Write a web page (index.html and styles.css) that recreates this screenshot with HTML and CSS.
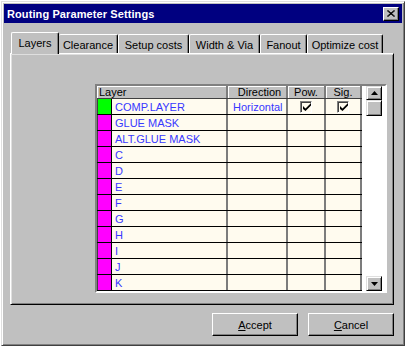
FILE: index.html
```html
<!DOCTYPE html>
<html lang="en">
<head>
    <meta charset="UTF-8">
    <title>Routing Parameter Settings</title>
    <link rel="stylesheet" href="styles.css">
</head>
<body>
<div class="dialog">
    <div class="titlebar">
        <span class="title">Routing Parameter Settings</span>
        <div class="close">
            <svg width="8" height="7" viewBox="0 0 8 7"><path d="M0 0.5L7 6.5M1 0.5L8 6.5M7 0.5L0 6.5M8 0.5L1 6.5" stroke="#000" stroke-width="1"/></svg>
        </div>
    </div>
    <div class="tabs">
        <div class="tab active w-layers">Layers</div>
        <div class="tab w-clear">Clearance</div>
        <div class="tab w-setup">Setup costs</div>
        <div class="tab w-width">Width &amp; Via</div>
        <div class="tab w-fanout">Fanout</div>
        <div class="tab w-opt">Optimize cost</div>
    </div>
    <div class="panel">
        <div class="grid">
            <div class="table">
                <div class="row head">
                    <div class="cell c-layer">Layer</div>
                    <div class="cell c-dir">Direction</div>
                    <div class="cell c-pow">Pow.</div>
                    <div class="cell c-sig">Sig.</div>
                </div>
                <div class="row">
                    <div class="cell c-layer"><span class="swatch green"></span>COMP.LAYER</div>
                    <div class="cell c-dir">Horizontal</div>
                    <div class="cell c-pow"><span class="check"><svg width="8" height="8" viewBox="0 0 8 8"><path d="M0 3v3l2.5 2l5.5-5.5v-2.5l-5.5 5.5z" fill="#000"/></svg></span></div>
                    <div class="cell c-sig"><span class="check"><svg width="8" height="8" viewBox="0 0 8 8"><path d="M0 3v3l2.5 2l5.5-5.5v-2.5l-5.5 5.5z" fill="#000"/></svg></span></div>
                </div>
                <div class="row"><div class="cell c-layer"><span class="swatch"></span>GLUE MASK</div><div class="cell c-dir"></div><div class="cell c-pow"></div><div class="cell c-sig"></div></div>
                <div class="row"><div class="cell c-layer"><span class="swatch"></span>ALT.GLUE MASK</div><div class="cell c-dir"></div><div class="cell c-pow"></div><div class="cell c-sig"></div></div>
                <div class="row"><div class="cell c-layer"><span class="swatch"></span>C</div><div class="cell c-dir"></div><div class="cell c-pow"></div><div class="cell c-sig"></div></div>
                <div class="row"><div class="cell c-layer"><span class="swatch"></span>D</div><div class="cell c-dir"></div><div class="cell c-pow"></div><div class="cell c-sig"></div></div>
                <div class="row"><div class="cell c-layer"><span class="swatch"></span>E</div><div class="cell c-dir"></div><div class="cell c-pow"></div><div class="cell c-sig"></div></div>
                <div class="row"><div class="cell c-layer"><span class="swatch"></span>F</div><div class="cell c-dir"></div><div class="cell c-pow"></div><div class="cell c-sig"></div></div>
                <div class="row"><div class="cell c-layer"><span class="swatch"></span>G</div><div class="cell c-dir"></div><div class="cell c-pow"></div><div class="cell c-sig"></div></div>
                <div class="row"><div class="cell c-layer"><span class="swatch"></span>H</div><div class="cell c-dir"></div><div class="cell c-pow"></div><div class="cell c-sig"></div></div>
                <div class="row"><div class="cell c-layer"><span class="swatch"></span>I</div><div class="cell c-dir"></div><div class="cell c-pow"></div><div class="cell c-sig"></div></div>
                <div class="row"><div class="cell c-layer"><span class="swatch"></span>J</div><div class="cell c-dir"></div><div class="cell c-pow"></div><div class="cell c-sig"></div></div>
                <div class="row"><div class="cell c-layer"><span class="swatch"></span>K</div><div class="cell c-dir"></div><div class="cell c-pow"></div><div class="cell c-sig"></div></div>
            </div>
            <div class="spacer"></div>
            <div class="scroll">
                <div class="sbtn"><svg width="7" height="4" viewBox="0 0 7 4"><path d="M3.5 0L7 4H0z" fill="#000"/></svg></div>
                <div class="thumb"></div>
                <div class="track"></div>
                <div class="sbtn down"><svg width="7" height="4" viewBox="0 0 7 4"><path d="M0 0H7L3.5 4z" fill="#000"/></svg></div>
            </div>
        </div>
    </div>
    <div class="buttons">
        <div class="btn"><u>A</u>ccept</div>
        <div class="btn"><u>C</u>ancel</div>
    </div>
</div>
</body>
</html>
```

FILE: styles.css
```css
* {
    box-sizing: border-box;
}
body {
    margin: 0;
    background-color: #fff;
    font-family: "Liberation Sans", Arial, sans-serif;
    font-size: 11px;
    color: #000;
}
.dialog {
    margin: 1px 0 0 1px;
    width: 404px;
    height: 345px;
    background-color: #c0c0c0;
    border: 1px solid;
    border-color: #dfdfdf #404040 #404040 #dfdfdf;
    box-shadow: inset 1px 1px #fff, inset -1px -1px #808080;
    padding: 2px;
    display: flex;
    flex-direction: column;
}
.titlebar {
    height: 19px;
    background-color: #000080;
    display: flex;
    align-items: center;
    justify-content: space-between;
    padding: 0 3px 0 3px;
}
.title {
    color: #fff;
    font-weight: bold;
    font-size: 11px;
    letter-spacing: 0.1px;
}
.close {
    width: 16px;
    height: 14px;
    background-color: #c0c0c0;
    border: 1px solid;
    border-color: #fff #000 #000 #fff;
    box-shadow: inset -1px -1px #808080;
    display: flex;
    align-items: center;
    justify-content: center;
    padding-bottom: 1px;
}
.tabs {
    margin: 9px 0 0 7px;
    height: 21px;
    display: flex;
    align-items: flex-end;
    position: relative;
    z-index: 1;
}
.tab {
    height: 19px;
    border: 1px solid;
    border-bottom: none;
    border-color: #fff #000 #000 #fff;
    border-radius: 2px 2px 0 0;
    box-shadow: inset -1px 0 #808080;
    display: flex;
    align-items: center;
    justify-content: center;
    padding-top: 1px;
    white-space: nowrap;
}
.tab.active {
    height: 22px;
    margin-bottom: -1px;
    background-color: #c0c0c0;
    padding-top: 0;
    padding-bottom: 2px;
}
.tab.active + .tab {
    border-left: none;
}
.w-layers { width: 48px; }
.w-clear { width: 59px; }
.w-setup { width: 71px; }
.w-width { width: 71px; }
.w-fanout { width: 47px; }
.w-opt { width: 76px; }
.panel {
    margin: 0 8px 0 6px;
    height: 252px;
    border: 1px solid;
    border-color: #fff #000 #000 #fff;
    box-shadow: inset 1px 1px #dfdfdf, inset -1px -1px #808080;
    padding: 30px 0 0 84px;
}
.grid {
    width: 292px;
    height: 209px;
    border: 2px solid;
    border-color: #808080 #fff #fff #808080;
    background-color: #fff;
    display: flex;
}
.table {
    width: 265px;
    display: flex;
    flex-direction: column;
}
.row {
    display: flex;
    height: 16px;
    border-bottom: 1px solid #000;
    background-color: #fffbef;
    color: #3838ff;
}
.row.head {
    height: 13px;
    background-color: #c0c0c0;
    color: #000;
    border-bottom: 1px solid #404040;
}
.cell {
    border-right: 2px solid #7c7c7c;
    display: flex;
    align-items: center;
    white-space: nowrap;
    overflow: hidden;
}
.head .cell {
    justify-content: center;
    box-shadow: inset 1px 1px #fff;
}
.c-layer {
    width: 131px;
}
.head .c-layer {
    justify-content: flex-start;
    padding-left: 2px;
}
.c-dir {
    width: 60px;
    padding-left: 5px;
}
.c-pow {
    width: 38px;
    justify-content: center;
}
.c-sig {
    width: 36px;
    justify-content: center;
}
.swatch {
    width: 15px;
    height: 15px;
    background-color: #ff00ff;
    border-right: 1px solid #000;
    border-left: 1px solid #404040;
    margin-right: 3px;
    flex-shrink: 0;
}
.swatch.green {
    background-color: #00ff00;
}
.check {
    width: 12px;
    height: 12px;
    border: 1px solid;
    border-color: #808080 #fff #fff #808080;
    box-shadow: inset 1px 1px #404040;
    background-color: #fffbef;
    display: flex;
    align-items: center;
    justify-content: center;
    padding: 1px 0 0 1px;
}
.spacer {
    width: 4px;
}
.scroll {
    width: 16px;
    height: 205px;
    display: flex;
    flex-direction: column;
}
.sbtn, .thumb {
    background-color: #c0c0c0;
    border: 1px solid;
    border-color: #dfdfdf #000 #000 #dfdfdf;
    box-shadow: inset 1px 1px #fff, inset -1px -1px #808080;
}
.sbtn {
    height: 14px;
    display: flex;
    align-items: center;
    justify-content: center;
}
.sbtn.down {
    height: 15px;
}
.thumb {
    height: 16px;
}
.track {
    flex: 1;
    background-color: #fff;
}
.buttons {
    margin: 8px 8px 0 0;
    display: flex;
    justify-content: flex-end;
    gap: 10px;
}
.btn {
    width: 86px;
    height: 23px;
    border: 1px solid;
    border-color: #fff #000 #000 #fff;
    box-shadow: inset -1px -1px #808080;
    display: flex;
    align-items: center;
    justify-content: center;
}
```
